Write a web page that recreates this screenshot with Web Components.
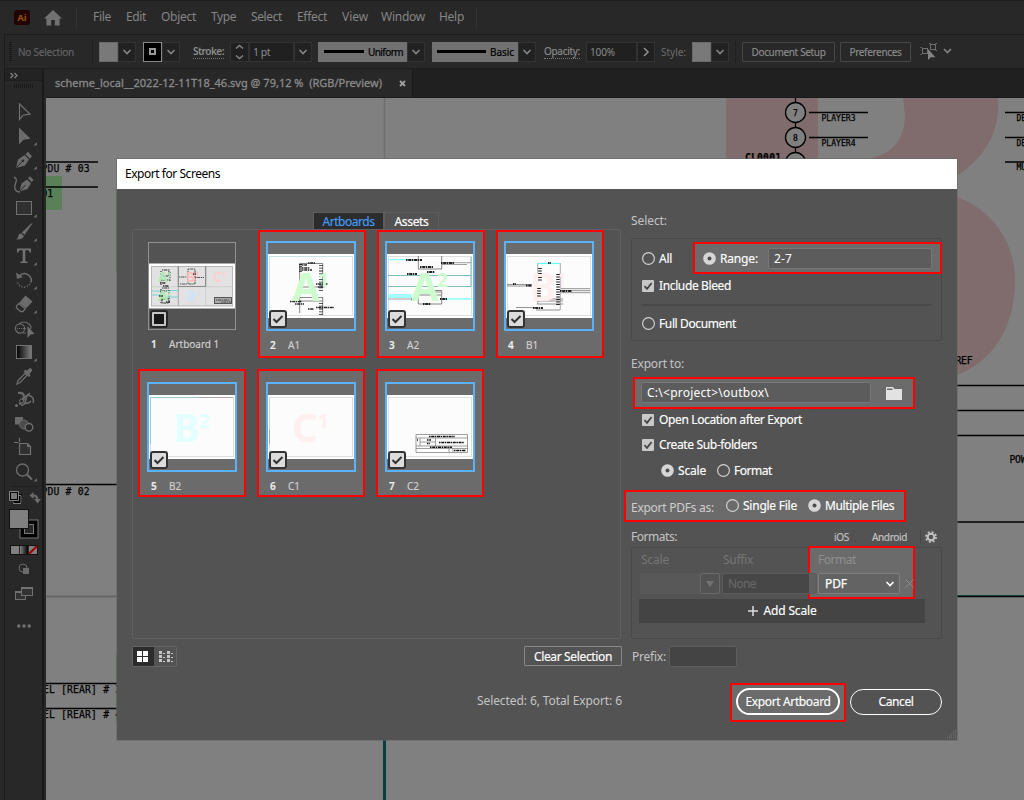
<!DOCTYPE html>
<html lang="en">
<head>
<meta charset="utf-8">
<title>Export for Screens</title>
<style>
html,body{margin:0;width:1024px;height:800px;overflow:hidden;background:#282828;font-family:"Noto Sans","Open Sans",sans-serif}
</style>
</head>
<body>
<ai-app></ai-app>
<script>
/* Registers an element whose shadow root holds the given styles and markup. */
const define = (name, css, html, ready) => {
  const tpl = document.createElement('template');
  tpl.innerHTML = `<style>*{box-sizing:border-box}${css}</style>${html}`;
  customElements.define(name, class extends HTMLElement {
    constructor() {
      super();
      this.attachShadow({mode: 'open'}).appendChild(tpl.content.cloneNode(true));
    }
    connectedCallback() { if (ready) ready(this, this.shadowRoot); }
  });
};

/* Tracks the text in .t so that it takes the width given in the w attribute. */
const fit = (host, root) => {
  const w = parseFloat(host.getAttribute('w'));
  const t = root.querySelector('.t');
  const n = host.textContent.trim().length;
  if (!w || !n) return;
  const natural = t.getBoundingClientRect().width;
  t.style.letterSpacing = ((w - natural) / n).toFixed(3) + 'px';
};

define('ui-label', `:host{display:block;flex:none;white-space:nowrap;line-height:16px}.t{display:inline-block}`,
  `<span class="t"><slot></slot></span>`, fit);

define('ui-radio', `:host{display:flex;flex:none;align-items:center;gap:4px;font-size:12px;line-height:16px;color:#fff;white-space:nowrap;-webkit-text-stroke:.15px}
  svg{display:block}.dot{display:none}:host([on]) .dot{display:block}:host([on]) .ring{display:none}`,
  `<svg width="13" height="13" viewBox="0 0 13 13"><circle class="ring" cx="6.5" cy="6.5" r="5.9" fill="none" stroke="#d2d2d2" stroke-width="1.2"/><g class="dot"><circle cx="6.5" cy="6.5" r="6.3" fill="#d6d6d6"/><circle cx="6.5" cy="6.5" r="2" fill="#4c4c4c"/></g></svg><span class="t"><slot></slot></span>`, fit);

define('ui-check', `:host{display:flex;flex:none;align-items:center;gap:5px;font-size:12px;line-height:16px;color:#fff;white-space:nowrap;-webkit-text-stroke:.15px}svg{display:block}`,
  `<svg width="12" height="12" viewBox="0 0 12 12"><rect width="12" height="12" rx="1" fill="#c8c8c8"/><path d="M2.5 6.2 5 8.8 9.6 3" fill="none" stroke="#454545" stroke-width="1.8"/></svg><span class="t"><slot></slot></span>`, fit);

/* Red marker frame laid around a control; its inset comes from the --i property. */
define('hl-box', `:host{position:absolute;inset:var(--i);border:2px solid #f00;background:#6b6b6b;z-index:-1;pointer-events:none}`, ``);

define('ui-chev', `:host{display:flex;flex:none;align-items:center;justify-content:center;width:18px;height:20px;border:1px solid #323232;background:#222}svg{display:block}`,
  `<svg width="10" height="8" viewBox="0 0 10 8"><path d="M1.5 2 5 5.5 8.5 2" fill="none" stroke="#858585" stroke-width="1.6"/></svg>`);

define('menu-bar', `:host{display:flex;align-items:center;height:34px;border-top:1px solid #1b1b1b;font-size:12px;color:#858585;background:#282828}
  ui-label{margin-left:var(--g,15px);margin-top:-1px} .ai{flex:none;width:16px;height:15px;margin-left:14px;border-radius:3px;background:#210302;color:#8f530d;font:bold 9.5px/15px "Noto Sans",sans-serif;text-align:center}
  i{width:1px;height:20px;background:#343434}`,
  `<div class="ai">Ai</div><svg style="margin-left:14px" width="18" height="16" viewBox="0 0 18 16"><path d="M9 0 18 8.4H15.6V15.5H10.8V10H7.2V15.5H2.4V8.4H0Z" fill="#717171"/></svg><i style="margin-left:14px"></i>
  <ui-label w="18" style="--g:16px">File</ui-label><ui-label w="20">Edit</ui-label><ui-label w="35">Object</ui-label><ui-label w="25">Type</ui-label><ui-label w="31">Select</ui-label><ui-label w="30">Effect</ui-label><ui-label w="26">View</ui-label><ui-label w="44" style="--g:13px">Window</ui-label><ui-label w="25" style="--g:14px">Help</ui-label><i style="margin-left:12px"></i>`);

define('control-bar', `:host{display:flex;align-items:center;height:35px;margin-left:4px;border:1px solid #1c1c1c;border-right:0;background:#282828;font-size:10px;color:#8c8c8c}
  :host>*{flex:none} .grip{width:3px;height:20px;margin-left:4px;background:repeating-linear-gradient(#171717 0 1px,transparent 1px 2px)}
  .sep{width:1px;height:24px;background:#202020}.sw{width:19px;height:20px;background:#797979;border:1px solid #6a6a6a}
  .blk{background:#000;border-color:#888;display:grid;place-items:center}.blk b{width:7px;height:7px;border:1px solid #999;display:grid;place-items:center}.blk b::after{content:"";width:3px;height:3px;border:1px solid #999}
  .fld{height:20px;border:1px solid #323232;background:#202020;display:flex;align-items:center;padding-left:3px}
  .dot{border-bottom:1px dotted #777;line-height:13px}.brush{height:20px;background:#717171;color:#000;display:flex;align-items:center}.brush b{height:3px;background:#000}
  .btn{height:20px;border:1px solid #474747;border-radius:1px;display:grid;place-items:center;-webkit-text-stroke:.15px}`,
  `<div class="grip"></div><ui-label w="56" style="margin-left:6px;color:#646464;-webkit-text-stroke:.15px">No Selection</ui-label><div class="sep" style="margin-left:18px"></div>
  <div class="sw" style="margin-left:6px"></div><ui-chev></ui-chev>
  <div class="sw blk" style="margin-left:7px"><b></b></div><ui-chev></ui-chev>
  <ui-label class="dot" w="31" style="margin-left:13px;font-weight:600">Stroke:</ui-label>
  <div class="fld" style="margin-left:6px;width:19px;padding:0"><svg width="17" height="18" viewBox="0 0 17 18"><path d="M5 5.5 8.5 2.500 12 5.500M5 12.500 8.500 15.500 12 12.500" fill="none" stroke="#858585" stroke-width="1.4"/></svg></div>
  <div class="fld" style="width:45px;font-size:10.5px"><ui-label w="17">1 pt</ui-label></div><ui-chev></ui-chev>
  <div class="brush" style="margin-left:6px;width:89px"><b style="width:40px;margin-left:6px"></b><ui-label w="35" style="margin-left:4px;-webkit-text-stroke:.2px">Uniform</ui-label></div><ui-chev></ui-chev>
  <div class="brush" style="margin-left:7px;width:86px"><b style="width:49px;margin-left:5px"></b><ui-label w="24" style="margin-left:4px;-webkit-text-stroke:.2px">Basic</ui-label></div><ui-chev></ui-chev>
  <ui-label class="dot" w="36" style="margin-left:8px;-webkit-text-stroke:.15px">Opacity:</ui-label>
  <div class="fld" style="margin-left:6px;width:51px"><ui-label w="25">100%</ui-label></div>
  <div class="fld" style="width:18px;padding:0"><svg width="16" height="12" viewBox="0 0 16 12"><path d="M6 2 10 6 6 10" fill="none" stroke="#909090" stroke-width="1.5"/></svg></div>
  <ui-label w="25" style="margin-left:6px;color:#6c6c6c">Style:</ui-label><div class="sw" style="margin-left:6px"></div><ui-chev></ui-chev><div class="sep" style="margin-left:6px"></div>
  <div class="btn" style="margin-left:6px;width:93px"><ui-label w="74">Document Setup</ui-label></div><div class="btn" style="margin-left:5px;width:71px"><ui-label w="52">Preferences</ui-label></div>
  <svg style="margin-left:9px" width="34" height="20" viewBox="0 0 34 20"><g fill="none" stroke="#707070"><rect x="2.5" y="6.5" width="5" height="5"/><rect x="10.5" y="2.5" width="5" height="5"/><path d="M.5 5.500H2M.5 12.500H2M17 1.500H15.500M9 1.500H10.500M17 8.500H15.500"/></g><path d="M8 7V18L10.800 15.200H15.500Z" fill="#848484"/><path d="M24 7 27.500 10.500 31 7" fill="none" stroke="#858585" stroke-width="1.6"/></svg>`);

/* Tool icons, each on a 24 × 24 cell. */
const TOOLS = [
  `<path d="M7.5 4 V19.5 L11 15.2 18 14Z" fill="none" stroke="#717171" stroke-width="1.2"/>`,
  `<path d="M7 3.5V20.5L11.5 15.8 18.5 14.8Z" fill="#6b6b6b"/>|`,
  `<path d="M4 20 6 11.5 12.5 7 17 11.5 13 17.5ZM13.5 6.2 16 3.8 20 8.2 17.8 10.7Z" fill="#6b6b6b"/><path d="M4.5 19.5 10.5 13" stroke="#282828" stroke-width="1"/><circle cx="11" cy="12.8" r="1.2" fill="#282828"/>|`,
  `<path d="M7.5 19.5 9.5 11.5 15 7.5 19 11.5 15.5 17ZM16 6.3 18 4.3 21.5 8 19.8 10.2Z" fill="#6b6b6b"/><path d="M8 19 13.5 13" stroke="#282828"/><path d="M2 5C6 7 4 10 3 13S3 20 8 20" fill="none" stroke="#6b6b6b" stroke-width="1.4"/>`,
  `<rect x="4.5" y="5.5" width="15" height="13" fill="#303030" stroke="#717171"/>|`,
  `<path d="M20.5 3.5 12.5 15 9.8 12.5 18.5 4Q20 2.8 20.5 3.5Z" fill="#6b6b6b"/><path d="M9 13.2 12 16Q10.5 20 4 19.5 6.5 18 6.3 15.5 7 13.5 9 13.2Z" fill="#6b6b6b"/>|`,
  `<path d="M5 4.5H19V8.5H17.5L17 6.3H13.3V17.2L15.5 17.7V19H8.5V17.7L10.7 17.2V6.3H7L6.5 8.5H5Z" fill="#717171"/>|`,
  `<path d="M6.5 8.5Q12 3 17 7.5 20.5 11 18.8 14.5" fill="none" stroke="#6b6b6b" stroke-width="1.6"/><path d="M4 4.5 5 11 11 9Z" fill="#6b6b6b"/><path d="M18 16Q12 22 6.5 16.5L5 13" fill="none" stroke="#6b6b6b" stroke-width="1.5" stroke-dasharray="1.2 1.6"/>|`,
  `<path d="M13.5 3.5 20.5 9.5 14 16.5 7 11Z" fill="#6b6b6b"/><path d="M6.8 11.5 13.2 16.8 11 19.5H8.5L4.5 16V14Z" fill="none" stroke="#6b6b6b" stroke-width="1.3"/>|`,
  `<circle cx="8" cy="12.5" r="4.6" fill="none" stroke="#6b6b6b" stroke-width="1.2"/><path d="M7 8Q12 4 17 8 20 11 18.5 13M11 17H14" fill="none" stroke="#6b6b6b" stroke-width="1.1"/><path d="M5 12.500H15" stroke="#6b6b6b" stroke-dasharray="1 1"/><path d="M15.5 10V22L18.5 18.5 22.5 18Z" fill="#717171"/>`,
  `<defs><linearGradient id="g"><stop stop-color="#000"/><stop offset="1" stop-color="#808080"/></linearGradient></defs><rect x="4.5" y="5.5" width="15" height="13" fill="url(#g)" stroke="#717171"/>|`,
  `<path d="M5 20 6 16.5 13 9.5 15 11.5 8 18.5Z" fill="none" stroke="#6b6b6b" stroke-width="1.3"/><path d="M11.5 7.5 17 13 18.5 11.5 17.5 10 20 7Q20.5 4.5 18 4L15 6.5 13.5 5.8Z" fill="#6b6b6b"/>`,
  `<path d="M6 5Q12 4 12 9T7 16" fill="none" stroke="#6b6b6b" stroke-width="2.200"/><path d="M9 17Q13 18 14 11T21 10Q22 13 21 15M9 12Q13 9 18 5M12 14Q15 17 19 13" fill="none" stroke="#6b6b6b" stroke-width="1.600"/><circle cx="9.500" cy="13" r="2" fill="#282828" stroke="#6b6b6b"/><circle cx="4.5" cy="17.5" r="1.500" fill="#6b6b6b"/>`,
  `<rect x="3" y="5" width="8" height="7.5" fill="#6b6b6b"/><circle cx="12" cy="12.5" r="4.5" fill="#4c4c4c" stroke="#666"/><circle cx="17" cy="15.3" r="3.8" fill="#282828" stroke="#717171" stroke-width="1.3"/>`,
  `<path d="M7.5 2V6M2 6.500H6.5M7.5 7.500H15.5L18.5 10.500V18.500H7.5Z" fill="#303030" stroke="#717171" stroke-width="1.2"/><path d="M15 7.5V11H18.5Z" fill="#717171"/>`,
  `<circle cx="10.5" cy="10" r="6" fill="none" stroke="#6b6b6b" stroke-width="1.4"/><path d="M15 14.5 20 19.5" stroke="#6b6b6b" stroke-width="2.2"/>|`
];
define('tool-strip', `:host{display:flex;flex-direction:column;width:40px;height:731px;border-left:1px solid #1b1b1b;border-right:2px solid #1a1a1a;background:#282828}
  .hd{height:12px;padding:3px 0 0 5px;border-bottom:1px solid #1d1d1d;background:#232323}.grip{width:20px;height:4px;margin:3px 0 12px 9px;background:repeating-linear-gradient(90deg,#181818 0 1px,transparent 1px 2px)}
  .tools{display:grid;grid-template-columns:24px;grid-auto-rows:24px;margin:0 0 2px 7px}svg{display:block}`,
  `<div class="hd"><svg width="8" height="7" viewBox="0 0 8 7"><path d="M.5 1 3 3.5.5 6M4.5 1 7 3.5 4.5 6" fill="none" stroke="#808080" stroke-width="1.300"/></svg></div><div class="grip"></div>
  <div class="tools">${TOOLS.map(t => `<svg width="28" height="24" viewBox="0 0 28 24" overflow="visible">${t.replace('|', '<path d="M25 18V21.5H21.5Z" fill="#666"/>')}</svg>`).join('')}</div>
  <svg width="37" height="150" viewBox="5 486 37 150"><path d="M10 486.5H38" stroke="#202020"/>
   <path d="M13.5 495.5h7v7h-7z" fill="none" stroke="#000" stroke-width="3"/><rect x="10.5" y="492.5" width="7" height="7" fill="#777" stroke="#000"/><path d="M9.5 491.5h9v9h-9zM19 495.500h2v8h-8v-2" fill="none" stroke="#808080"/>
   <path d="M32 495.500Q37.500 495 37.500 500" fill="none" stroke="#6b6b6b" stroke-width="2"/><path d="M29.500 495.500 33.500 492V499ZM34 499H41L37.500 503.500Z" fill="#6b6b6b"/>
   <rect x="20" y="520" width="18" height="18" fill="#000" stroke="#777"/><rect x="24.500" y="524.500" width="9" height="9" fill="#282828" stroke="#777"/><rect x="9.500" y="509.500" width="19" height="19" fill="#808080" stroke="#111"/>
   <rect x="10.500" y="545.500" width="27" height="9" fill="#282828" stroke="#111"/><rect x="11" y="546" width="8" height="8" fill="#808080"/><defs><linearGradient id="h"><stop stop-color="#808080"/><stop offset="1" stop-color="#000"/></linearGradient></defs><rect x="20" y="546" width="8" height="8" fill="url(#h)"/><rect x="29" y="546" width="8" height="8" fill="#808080"/><path d="M29 554 37 546" stroke="#a00000" stroke-width="2"/>
   <circle cx="23" cy="568" r="4" fill="none" stroke="#6b6b6b"/><rect x="23" y="568" width="6" height="6" fill="#6b6b6b"/>
   <rect x="15.500" y="591.500" width="10" height="8" fill="#333" stroke="#717171"/><path d="M15 592h7" stroke="#717171" stroke-width="2"/><rect x="21.500" y="587.500" width="11" height="8" fill="#333" stroke="#717171"/><path d="M21 588h12" stroke="#717171" stroke-width="2"/>
   <g fill="#717171"><circle cx="18.800" cy="626" r="1.700"/><circle cx="24" cy="626" r="1.700"/><circle cx="29.200" cy="626" r="1.700"/></g></svg>`);

define('doc-tabs', `:host{display:flex;height:29px;background:#202020;border-bottom:1px solid #1b1b1b}
  .tab{display:flex;align-items:center;width:367px;padding-left:9px;background:#282828;border-right:1px solid #1a1a1a;color:#8a8a8a;font-size:11px;-webkit-text-stroke:.3px}`,
  `<div class="tab"><ui-label w="327" style="white-space:pre">scheme_local__2022-12-11T18_46.svg @ 79,12 %  (RGB/Preview)</ui-label><svg style="margin-left:17px" width="7" height="7" viewBox="0 0 7 7"><path d="M1 1 6 6M6 1 1 6" stroke="#a0a0a0" stroke-width="1.800"/></svg></div>`);

define('art-canvas', `:host{display:block;height:702px;background:#808080}svg{display:block}text{font-family:"DejaVu Sans Mono","Liberation Mono",monospace;font-size:9.700px;stroke:#000;stroke-width:.25px}.s{font-size:8px}`,
  `<svg width="978" height="702" viewBox="46 98 978 702">
   <path d="M726 98H818V160H726ZM903 98H998V112Q995 150 957 176V159H870Q905 150 905 115ZM957 197C990 209 1015 240 1015 280 1015 330 991 362 957 375Z" fill="#806c6c"/>
   <rect x="46" y="176" width="16" height="34" fill="#5a805a"/><path d="M116.500 189V272M116.500 654V722" stroke="#4d754d"/>
   <path d="M384.500 98V160" stroke="#6d6d6d" stroke-width="1.500"/><path d="M384.500 740V800" stroke="#063f40" stroke-width="3"/><path d="M46 596.500H117" stroke="#666" stroke-width="2"/>
   <path d="M46 162H98M46 187H98M46 484.500H117M46 683.500H117M46 708.500H117M957 385.500H1024M957 410.500H1024M957 435.500H1024M957 522H1024M957 596.500H1024" stroke="#000" stroke-width="1.300"/><path d="M957 595.500H1024" stroke="#174040"/>
   <path d="M809 112.500H868M809 137.500H868M1005 112.500H1024M1005 137.500H1024M1005 162H1024M795.500 98V165" stroke="#000" stroke-width="1.300"/>
   <g fill="#808080" stroke="#000" stroke-width="1.300"><circle cx="795.500" cy="112.500" r="10"/><circle cx="795.500" cy="137.500" r="10"/><circle cx="795.500" cy="162.500" r="10"/></g>
   <text class="s" x="793" y="115.500">7</text><text class="s" x="793" y="140.500">8</text>
   <text class="s" x="821.500" y="120.500" textLength="34">PLAYER3</text><text class="s" x="821.500" y="145.500" textLength="34">PLAYER4</text>
   <text x="745" y="160.500" textLength="36" font-weight="bold">CL0001</text>
   <text class="s" x="1016.500" y="120.500">DE</text><text class="s" x="1016.500" y="145.500">DE</text><text class="s" x="1016.500" y="170">MU</text>
   <text x="41.500" y="172" textLength="48">PDU # 03</text><text x="41.500" y="197">01</text><text x="41.500" y="495" textLength="48">PDU # 02</text>
   <text x="43" y="693" textLength="78">EL [REAR] # 3</text><text x="43" y="718" textLength="78">EL [REAR] # 4</text>
   <text x="955.500" y="363.500" textLength="17">REF</text><text x="1009.500" y="463" textLength="17">POW</text></svg>`);

/* Miniature drawings shown in the artboard cards, on an 86 × 86 field. */
const page = `<rect y="11" width="86" height="64" fill="#fff"/><rect x="1.500" y="13.500" width="83" height="59" fill="#fcfcfc" stroke="#dedede"/>`;
const big = (c, s, col) => `<text x="24" y="58" font-size="40" fill="${col}">${c}</text><text x="50" y="44" font-size="19" fill="${col}">${s}</text>`;
const K = (d, c = '#222', w = .8, e = '') => `<path d="${d}" fill="none" stroke="${c}" stroke-width="${w}" ${e}/>`;
const D = 'stroke-dasharray="1.500 .7 3 .6"';
const mini = (x, y, a, b, col) => `<text x="${x}" y="${y}" font-size="14" fill="${col}">${a}</text><text x="${x + 9}" y="${y - 5}" font-size="7" fill="${col}">${b}</text>`;
const ART = {
  all: `<rect y="20.500" width="86" height="45" fill="#fff"/><rect x="2.500" y="23.500" width="81" height="39.500" fill="#e2e2e2" stroke="#b5b5b5"/>` + K('M29.300 23V63M56.700 23V43.500', '#999') + K('M56.700 43.500V63M2 43.700H84', '#c8c8c8') +
    K('M3 48H12M3 52H13M18 47.500H29M18 54H29', '#5fd0d8') +
    K('M13 27H20V33H14M12 37H21M13 45H20M11 48H18M13 56H20V60H13Z', '#333', 1.100, D) + K('M39 26H46V41H39ZM30 34H38M46 34.500H55M31 41H38', '#555', 1, D) + K('M12 28V42M21 29V39M12 46V60M20 47V57', '#444', 1.300, 'stroke-dasharray="1 1.600"') +
    mini(9, 39, 'A', '1', '#aeeab4') + mini(9, 58, 'A', '2', '#a8ecae') + mini(37, 39, 'B', '1', '#ffbebe') + mini(64, 39, 'C', '1', '#ffcfcf') + mini(37, 58, 'B', '2', '#cfe4f8') +
    K('M11 40H17M14 43H20M10 53H14M17 59H21M44 31H47', '#333', 1.400, D) +
    K('M29.300 23V43.500H56.700V23', '#777') + '<rect x="65.500" y="54.500" width="17" height="6" fill="#aaa" stroke="#555"/>' + K('M67 57H81M72 59H82', '#444', 1, D),
  a1: page + K('M1.500 73V13.500H84', '#bde5e7') + K('M31.700 20.500H54.700V44H31.700ZM31.700 54.500H54.700M31.700 58H54.700M31.700 54V70M54.700 54V72', '#555', .700) +
    K('M34 22H39M34 25H42M34 27H44M40 20H47M48 41H60M50 44H56', '#222', 1.500, D) + K('M32.500 21V29', '#222', 3, 'stroke-dasharray="1.200 1"') + K('M53 22V48', '#222', 4, 'stroke-dasharray=".8 2"') + K('M22 58.500H34M48 64.500H66M27 61H36M40 66H46M45 56H47', '#222', 1.500, D) + K('M53 60V72', '#222', 4, 'stroke-dasharray=".8 2"') + big('A', '1', '#cdfccf'),
  a2: page + K('M2 16.700H27M1 52H25M1 54H25M55 56H84', '#8ff', 1.300) + K('M1 32.500H84M1 43.500H84V14', '#61a9aa') + K('M55 19.700H84M55 21.500H80M1 56H24', '#888') + K('M31.300 13V26H54.700V13M31.300 47.500H54.700V61H31.300ZM31 49H54M31 52H54', '#555', .700) +
    K('M19 17H35M20 31H30M33 24H46M54 20H67M40 29H48M24 56.500H30M53 56H60M36 61H44', '#222', 2, D) + big('A', '2', '#cdfccf'),
  b1: page + K('M1 41.500H26M1 43H26M55 45.700H84M55 47.700H84M55 49.700H84M10 64.500H31M30 67H54M31 56H57M31 58H57M31 61H57', '#777') + K('M31.700 20V61M54.300 20V67', '#777', .600) + K('M31.700 20.500H54', '#6ff', 1.200) + big('B', '1', '#fff0f0') +
    K('M34 25V32M34 34V39M33 45V54M52 31V62', '#222', 3.600, 'stroke-dasharray="1 1.500"') + K('M7 41H10M20 42.500H26M54 48H66M27 65H37M42 20H45', '#222', 2, D),
  b2: page + K('M1.500 60V13.500H65', '#8ec1c3') + K('M50 13.500H84', '#a99') + big('B', '2', '#e3ffff'),
  c1: page + K('M1.500 14V50', '#ccc') + K('M1.500 46V60', '#999') + big('C', '1', '#ffefef'),
  c2: page + K('M29 50.500H80.500V68.500H29ZM29 54H81M29 62H81M29 64.500H81M33 54V62M48.500 54V62M33 58H48M62 64.500V68.500M66 64.500V68.500', '#777', .700) +
    K('M42 52.500H68M30 56H31M40 56H44M40 59.500H43M52 58.500H77M43 63.300H65M67 66.500H79', '#111', 1.500, D)
};
define('art-card', `:host{display:block;position:relative;width:90px;height:112px;font-size:10px;color:#d0d0d0;isolation:isolate}
  hl-box{--i:-11px -10px -5px -8px}:host([low]) hl-box{--i:-13px -9px -3px -9px}:host([plain]) hl-box{display:none}
  .th{display:block;width:90px;height:90px;border:2px solid #5cb1fc}:host([plain]) .th{width:88px;height:88px;margin:1px;border:1px solid #909090}svg{display:block}
  .ck{position:absolute;left:3px;top:69px}.cap{display:grid;grid-template-columns:18px 1fr;padding:6px 0 0 4px;line-height:16px;-webkit-text-stroke:.15px}:host([plain]) .cap{padding-top:5px}b{color:#eee;font-weight:600}text{font-family:"Noto Sans",sans-serif;font-weight:bold;-webkit-text-stroke:0}`,
  `<hl-box></hl-box><div class="th"></div><svg class="ck" width="18" height="18" viewBox="0 0 18 18"></svg><div class="cap"><b></b><span><slot></slot></span></div>`,
  (h, r) => {
    r.querySelector('.th').innerHTML = `<svg width="86" height="86" viewBox="0 0 86 86">${ART[h.getAttribute('art')]}</svg>`;
    r.querySelector('b').textContent = h.getAttribute('n');
    r.querySelector('.ck').innerHTML = h.hasAttribute('plain')
      ? '<rect x="1" y="1" width="16" height="16" rx="2" fill="#c4c4c4" stroke="#262626" stroke-width="2"/><rect x="3" y="3" width="12" height="12" fill="#c4c4c4"/><rect x="4" y="4" width="10" height="10" fill="#161616"/>'
      : '<rect x="1" y="1" width="16" height="16" rx="2" fill="#dcdcdc" stroke="#333" stroke-width="2"/><path d="M4.500 9 7.500 12 13.500 6" fill="none" stroke="#333" stroke-width="2"/>';
  });

define('artboard-pane', `:host{display:flex;flex-direction:column;width:489px}
  .tabs{display:flex;height:18px;margin-left:181px;font-size:12px;color:#fff}.tabs div{height:18px;border:1px solid #5d5d5d;border-bottom:0;display:flex;align-items:center;justify-content:center}.tabs .on{width:71px;background:#2c2c2c;color:#459cf5;-webkit-text-stroke:.15px}.tabs .off{width:55px}
  .list{height:410px;margin-top:-1px;border:1px solid #606060;border-radius:2px;padding:11px 0 0 14px;display:grid;grid-template-columns:repeat(4,90px);grid-auto-rows:112px;gap:29px;align-content:start}
  .ft{display:flex;justify-content:space-between;margin-top:7px;width:490px}.seg{display:flex;width:45px;height:21px;border:1px solid #646464;border-radius:2px}.seg div{display:grid;place-items:center;width:21px}.seg .on{background:#2c2c2c;padding-right:2px}.seg .off{width:22px;padding-left:2px}
  .clr{width:98px;height:20px;border:1px solid #888;border-radius:1px;display:grid;place-items:center;padding-top:1px;font-size:12px;color:#fff;-webkit-text-stroke:.15px}svg{display:block}.st{align-self:flex-end;margin:26px -1px 0 0;font-size:12px;color:#c4c4c4}`,
  `<div class="tabs"><div class="on"><ui-label w="52">Artboards</ui-label></div><div class="off"><ui-label w="34" style="-webkit-text-stroke:.2px">Assets</ui-label></div></div>
  <div class="list"><art-card plain art="all" n="1">Artboard 1</art-card><art-card art="a1" n="2">A1</art-card><art-card art="a2" n="3">A2</art-card><art-card art="b1" n="4">B1</art-card>
  <art-card low art="b2" n="5">B2</art-card><art-card low art="c1" n="6">C1</art-card><art-card low art="c2" n="7">C2</art-card></div>
  <div class="ft"><div class="seg"><div class="on"><svg width="11" height="11" viewBox="0 0 11 11"><path d="M0 0H5V5H0ZM6 0H11V5H6ZM0 6H5V11H0ZM6 6H11V11H6Z" fill="#fff"/></svg></div><div class="off"><svg width="14" height="11" viewBox="0 0 14 11"><path d="M0 0h3v3H0zM0 4h3v3H0zM0 8h3v3H0zM8 0h3v3H8zM8 4h3v3H8zM8 8h3v3H8zM4 2h2v1H4zM4 6h2v1H4zM4 10h2v1H4zM12 2h2v1h-2zM12 6h2v1h-2zM12 10h2v1h-2z" fill="#c5c5c5"/></svg></div></div>
  <div class="clr"><ui-label w="78">Clear Selection</ui-label></div></div><ui-label class="st" w="145">Selected: 6, Total Export: 6</ui-label>`);

define('export-options', `:host{display:flex;flex-direction:column;width:311px;font-size:12px;color:#c3c3c3}
  .row{display:flex;align-items:center;position:relative;isolation:isolate;flex:none}
  .panel{border:1px solid #484848;border-radius:2px;flex:none;position:relative}
  .in{height:21px;border:1px solid #777;border-radius:2px;background:#5c5c5c;color:#fff;display:flex;align-items:center;padding-left:5px;flex:none}
  hr{margin:0 9px;border:0;height:2px;background:#494949}.cols{display:grid;grid-template-columns:82px 95px 1fr;padding-left:9px;color:#757575;height:24px;align-items:center;position:relative}
  .add{display:flex;align-items:center;justify-content:center;gap:6px;height:24px;width:286px;margin:5px 0 0 7px;background:#444;color:#fff;-webkit-text-stroke:.15px}
  .act{display:flex;gap:10px;margin:21px 0 0 105px;height:27px;align-items:center;position:relative;isolation:isolate}.act .b{display:grid;place-items:center;padding-top:1px;border-radius:14px;color:#fff;-webkit-text-stroke:.15px}svg{display:block;flex:none}`,
  `<ui-label w="36" style="height:16px">Select:</ui-label>
  <div class="panel" style="height:103px;margin-top:9px;isolation:isolate">
    <div class="row" style="height:21px;margin-top:9px;padding-left:10px"><hl-box style="--i:-6px -1px -5px 61px"></hl-box><ui-radio w="13">All</ui-radio><ui-radio on w="38" style="margin-left:31px">Range:</ui-radio><div class="in" style="width:164px;margin-left:10px"><ui-label w="18">2-7</ui-label></div></div>
    <ui-check w="72" style="height:16px;margin:9px 0 0 10px">Include Bleed</ui-check><hr style="margin-top:10px"><ui-radio w="77" style="height:17px;margin:9px 0 0 10px">Full Document</ui-radio>
  </div>
  <ui-label w="53" style="margin-top:15px;height:16px">Export to:</ui-label>
  <div class="row" style="height:21px;margin-top:10px;padding-left:10px"><hl-box style="--i:-5px 27px -6px 2px"></hl-box><div class="in" style="width:230px"><ui-label w="122">C:\\&lt;project&gt;\\outbox\\</ui-label></div><svg style="margin:2px 0 0 15px" width="16" height="13" viewBox="0 0 16 13"><path d="M0 0H7L8.500 2H16V13H0Z" fill="#e2e2e2"/><path d="M1 1.500H6L7 3H1Z" fill="#6b6b6b"/></svg></div>
  <ui-check w="143" style="height:16px;margin:9px 0 0 11px">Open Location after Export</ui-check>
  <ui-check w="98" style="height:16px;margin:9px 0 0 11px">Create Sub-folders</ui-check>
  <div class="row" style="height:17px;margin-top:9px;padding-left:30px"><ui-radio on w="28">Scale</ui-radio><ui-radio w="38" style="margin-left:11px">Format</ui-radio></div>
  <div class="row" style="height:17px;margin-top:18px"><hl-box style="--i:-7px 36px -8px -7px"></hl-box><ui-label w="83" style="margin-top:4px;color:#cecece">Export PDFs as:</ui-label><ui-radio w="54" style="margin-left:12px">Single File</ui-radio><ui-radio on w="69" style="margin-left:11px">Multiple Files</ui-radio></div>
  <div class="row" style="height:17px;margin-top:14px"><ui-label w="46" style="margin-right:157px">Formats:</ui-label><ui-label w="15" style="font-size:10px;-webkit-text-stroke:.15px">iOS</ui-label><ui-label w="35" style="font-size:10px;margin-left:23px;-webkit-text-stroke:.15px">Android</ui-label><i style="width:1px;height:14px;background:#474747;margin:0 4px 0 13px"></i>
    <svg width="12" height="12" viewBox="0 0 12 12"><circle cx="6" cy="6" r="3.300" fill="none" stroke="#c3c3c3" stroke-width="2"/><circle cx="6" cy="6" r="5" fill="none" stroke="#c3c3c3" stroke-width="1.800" stroke-dasharray="2 1.927"/></svg></div>
  <div class="panel" style="height:92px;margin-top:2px;isolation:isolate"><hl-box style="--i:-2px 26px 39px 176px"></hl-box>
    <div class="cols"><ui-label w="28">Scale</ui-label><ui-label w="30">Suffix</ui-label><ui-label w="38" style="color:#8f8f8f">Format</ui-label></div>
    <div class="row" style="height:21px;margin-top:1px;padding-left:8px"><div style="width:60px;height:21px;background:#585858"></div><div class="in" style="width:20px;background:none;border-color:#6a6a6a"><svg width="8" height="6" viewBox="0 0 8 6"><path d="M0 0H8L4 6Z" fill="#737373"/></svg></div><div class="in" style="width:95px;margin-left:2px;background:linear-gradient(90deg,#474747 86px,#606060 0);border-color:#5b5b5b;color:#686868"><ui-label w="28">None</ui-label></div>
      <div class="in" style="width:82px;margin-left:1px;padding-left:6px;background:#636363;border-color:#808080"><ui-label w="22" style="-webkit-text-stroke:.25px">PDF</ui-label><svg style="margin-left:38px" width="10" height="8" viewBox="0 0 10 8"><path d="M1.500 2 5 5.500 8.500 2" fill="none" stroke="#fff" stroke-width="1.600"/></svg></div><svg style="margin-left:5px" width="9" height="9" viewBox="0 0 9 9"><path d="M.5.5 8.500 8.500M8.500.5.5 8.500" stroke="#8c8c8c"/></svg></div>
    <div class="add"><svg width="10" height="10" viewBox="0 0 10 10"><path d="M5 0V10M0 5H10" stroke="#ddd" stroke-width="1.500"/></svg><ui-label w="53">Add Scale</ui-label></div>
  </div>
  <div class="row" style="height:21px;margin-top:7px;padding-left:1px"><ui-label w="34">Prefix:</ui-label><div class="in" style="width:68px;margin-left:3px;background:#444;border-color:#5e5e5e"></div></div>
  <div class="act"><hl-box style="--i:-5px 96px -7px -6px"></hl-box><div class="b" style="width:104px;height:27px;border:2px solid #fff"><ui-label w="85">Export Artboard</ui-label></div><div class="b" style="width:92px;height:26px;border:1px solid #fff"><ui-label w="35">Cancel</ui-label></div></div>`);

define('export-dialog', `:host{position:absolute;left:117px;top:159px;width:840px;height:581px;background:#535353;box-shadow:0 0 0 1px #68686899;display:flex;flex-direction:column}
  header{height:30px;background:#fff;color:#000;font-size:12px;display:flex;align-items:center;padding-left:8px}main{display:flex;gap:10px;padding-left:15px}artboard-pane{margin-top:23px}export-options{margin-top:24px}
  .grip{position:absolute;right:1px;bottom:1px}`,
  `<header><ui-label w="95">Export for Screens</ui-label></header><main><artboard-pane></artboard-pane><export-options></export-options></main><svg class="grip" width="9" height="9" viewBox="0 0 9 9"><path d="M0 8h1M2 8h1M4 8h1M6 8h1M8 8h1M2 6h1M4 6h1M6 6h1M8 6h1M4 4h1M6 4h1M8 4h1M6 2h1M8 2h1M8 .5h1" stroke="#777"/></svg>`);

define('ai-app', `:host{display:flex;flex-direction:column;width:1024px;height:800px;position:relative;background:#282828;overflow:hidden}
  .work{display:flex;padding-left:4px;width:1024px}.doc{width:980px;flex:none;margin-left:2px}.work tool-strip{flex:none}`,
  `<menu-bar></menu-bar><control-bar></control-bar><div class="work"><tool-strip></tool-strip><div class="doc"><doc-tabs></doc-tabs><art-canvas></art-canvas></div></div><export-dialog></export-dialog>`);
</script>
</body>
</html>
